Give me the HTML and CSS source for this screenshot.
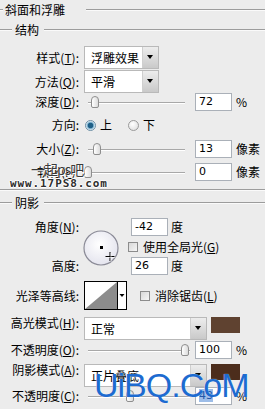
FILE: index.html
```html
<!DOCTYPE html>
<html lang="zh-CN">
<head>
  <meta charset="UTF-8" />
  <title>斜面和浮雕</title>
  <link rel="stylesheet" href="styles.css">
</head>
<body>
  <div class="panel">
    <div class="legend top"><span>斜面和浮雕</span></div>
    <div class="legend sub"><span>结构</span></div>

    <!-- 结构 -->
    <div class="row r-style">
      <label class="lbl">样式(<u>T</u>):</label>
      <div class="select s-short"><span>浮雕效果</span><i class="btn"></i></div>
    </div>
    <div class="row r-method">
      <label class="lbl">方法(<u>Q</u>):</label>
      <div class="select s-short"><span>平滑</span><i class="btn"></i></div>
    </div>
    <div class="row r-depth">
      <label class="lbl">深度(<u>D</u>):</label>
      <div class="slider"><i class="thumb" style="left:3px"></i></div>
      <div class="num">72</div><span class="unit">%</span>
    </div>
    <div class="row r-dir">
      <label class="lbl">方向:</label>
      <i class="radio on"></i><span class="rtext">上</span>
      <i class="radio"></i><span class="rtext">下</span>
    </div>
    <div class="row r-size">
      <label class="lbl">大小(<u>Z</u>):</label>
      <div class="slider"><i class="thumb" style="left:5px"></i></div>
      <div class="num">13</div><span class="unit">像素</span>
    </div>
    <div class="row r-soft">
      <label class="lbl">软化(<u>F</u>):</label>
      <div class="slider"><i class="thumb" style="left:-4px"></i></div>
      <div class="num">0</div><span class="unit">像素</span>
    </div>

    <div class="sep"></div>
    <div class="legend sub shadow"><span>阴影</span></div>

    <!-- 阴影 -->
    <div class="angle-block">
      <div class="col-labels">
        <label class="lbl">角度(<u>N</u>):</label>
        <label class="lbl">高度:</label>
      </div>
      <div class="dial">
        <svg width="38" height="38" viewBox="0 0 38 38">
          <defs>
            <radialGradient id="dg" cx="0.45" cy="0.4" r="0.6">
              <stop offset="0" stop-color="#ffffff"/>
              <stop offset="1" stop-color="#e4e4ee"/>
            </radialGradient>
          </defs>
          <circle cx="18" cy="18" r="17" fill="url(#dg)" stroke="#8a8a96" stroke-width="1.2"/>
          <rect x="17" y="16" width="3" height="3" fill="#000"/>
          <path d="M27 22v9M22.5 26.5h9" stroke="#000" stroke-width="1"/>
          <path d="M28 23v9M23.5 27.5h9" stroke="#fff" stroke-width="0.8" opacity="0.7"/>
        </svg>
      </div>
      <div class="col-fields">
        <div class="field"><div class="num">-42</div><span class="unit deg">度</span></div>
        <div class="field chk-row"><i class="check"></i><span>使用全局光(<u>G</u>)</span></div>
        <div class="field"><div class="num">26</div><span class="unit deg">度</span></div>
      </div>
    </div>

    <div class="row r-contour">
      <label class="lbl">光泽等高线:</label>
      <svg class="contour" width="43" height="29" viewBox="0 0 43 29">
        <rect x="0.5" y="0.5" width="33" height="28" fill="#fff" stroke="#000"/>
        <path d="M1 28L33 1V28Z" fill="#8c8c8c"/>
        <rect x="33.5" y="0.5" width="9" height="28" fill="#fff" stroke="#000"/>
        <path d="M35.5 13h5l-2.5 3z" fill="#000"/>
      </svg>
      <i class="check anti"></i><span>消除锯齿(<u>L</u>)</span>
    </div>

    <div class="row r-hmode">
      <label class="lbl">高光模式(<u>H</u>):</label>
      <div class="select s-long"><span>正常</span><i class="btn"></i></div>
      <i class="swatch hi"></i>
    </div>
    <div class="row r-op1">
      <label class="lbl">不透明度(<u>O</u>):</label>
      <div class="slider long"><i class="thumb" style="left:93px"></i></div>
      <div class="num">100</div><span class="unit">%</span>
    </div>
    <div class="row r-smode">
      <label class="lbl">阴影模式(<u>A</u>):</label>
      <div class="select s-long"><span>正片叠底</span><i class="btn"></i></div>
      <i class="swatch sh"></i>
    </div>
    <div class="row r-op2">
      <label class="lbl">不透明度(<u>C</u>):</label>
      <div class="slider long"><i class="thumb" style="left:38px"></i></div>
      <div class="num"><span class="sel">43</span></div><span class="unit">%</span>
    </div>

    <!-- watermarks -->
    <div class="wm-cn">一起ps吧</div>
    <div class="wm-url">www.17PS8.com</div>
    <div class="wm-big">UiBQ.CoM</div>
  </div>
</body>
</html>
```

FILE: styles.css
```css
body {
  margin: 0;
  background: #ececec;
  font-family: "Noto Sans CJK SC", "Liberation Sans", sans-serif;
  font-size: 12px;
  color: #000;
}
.panel {
  position: relative;
  width: 265px;
  height: 409px;
  overflow: hidden;
}
u {
  text-decoration-thickness: 1px;
  text-underline-offset: 1px;
}

/* group titles */
.legend {
  display: flex;
  align-items: center;
  height: 20px;
  line-height: 1;
}
.legend::before,
.legend::after {
  content: "";
  height: 1px;
  background: #9c9c9c;
  border-bottom: 1px solid #fafafa;
}
.legend::before { width: 3px; margin-right: 2px; }
.legend::after { flex: 1; margin-left: 21px; }
.legend.sub::before { width: 12px; margin-right: 3px; }
.legend.sub::after { margin-left: 5px; }
.legend.shadow {
  height: 18px;
  margin-top: 3px;
}
.sep {
  height: 1px;
  margin-top: 8px;
  background: #9c9c9c;
  border-bottom: 1px solid #fafafa;
}

/* rows */
.row {
  display: flex;
  align-items: center;
  height: 18px;
}
.lbl {
  flex: none;
  width: 79px;
  margin-right: 5px;
  text-align: right;
  line-height: 1;
  white-space: nowrap;
}
.r-style { height: 23px; margin-top: 6px; }
.r-method { height: 23px; margin-top: 1px; }
.r-depth { margin-top: 0; }
.r-dir { margin-top: 5px; }
.r-size { margin-top: 6px; }
.r-soft { margin-top: 5px; }
.r-contour { height: 29px; margin-top: 6px; }
.r-hmode { height: 23px; margin-top: 7px; align-items: flex-start; }
.r-op1 { margin-top: 1px; }
.r-smode { height: 23px; margin-top: 5px; align-items: flex-start; }
.r-op2 { margin-top: 0; }

/* dropdowns */
.select {
  display: flex;
  height: 23px;
  box-sizing: border-box;
  border: 1px solid #b9b9b9;
  background: #fff;
}
.select span {
  flex: 1;
  padding-left: 6px;
  line-height: 21px;
}
.select .btn {
  position: relative;
  width: 15px;
  border-left: 1px solid #cfcfcf;
  background: linear-gradient(#ededed, #c9c9c9);
}
.select .btn::after {
  content: "";
  position: absolute;
  left: 4px;
  top: 8px;
  border-left: 3.5px solid transparent;
  border-right: 3.5px solid transparent;
  border-top: 4px solid #000;
}
.s-short { width: 75px; }
.s-long { width: 123px; }

/* sliders */
.slider {
  position: relative;
  flex: none;
  width: 97px;
  height: 18px;
  margin-left: 4px;
  margin-right: 10px;
}
.slider.long {
  width: 102px;
  margin-right: 5px;
}
.slider::before {
  content: "";
  position: absolute;
  left: 0;
  right: 0;
  top: 9px;
  height: 1px;
  background: #a8a8a8;
  border-bottom: 1px solid #fff;
}
.thumb {
  position: absolute;
  top: 3px;
  width: 8px;
  height: 12px;
  box-sizing: border-box;
  border: 1px solid #8e8e8e;
  border-radius: 4px 4px 2px 2px;
  background: linear-gradient(90deg, #fff, #dcdcdc);
}

/* number fields */
.num {
  flex: none;
  width: 37px;
  height: 18px;
  box-sizing: border-box;
  border: 1px solid #aab0b8;
  background: #fff;
  padding-left: 3px;
  font-family: "DejaVu Sans", sans-serif;
  font-size: 11px;
  line-height: 16px;
}
.num .sel {
  background: #9dbde8;
  color: #2456a8;
}
.unit {
  margin-left: 4px;
  line-height: 1;
}
.unit.deg { margin-left: 3px; }

/* radios & checks */
.radio {
  flex: none;
  width: 11px;
  height: 11px;
  box-sizing: border-box;
  border: 1px solid #9a9a9a;
  border-radius: 50%;
  background: radial-gradient(circle at 40% 35%, #fff, #dadada);
  margin-left: 1px;
}
.radio.on {
  background: radial-gradient(circle, #1f5f86 0 2.5px, #6fa8c8 3px, #e8f2f8 4.5px);
  border-color: #6b8ea5;
}
.rtext {
  margin-left: 4px;
  margin-right: 15px;
  line-height: 1;
}
.check {
  flex: none;
  width: 10px;
  height: 10px;
  box-sizing: border-box;
  border: 1px solid #8c8c8c;
  background: linear-gradient(135deg, #d8d8d8, #f6f6f6);
  margin-right: 5px;
}
.check.anti { margin-left: 13px; margin-right: 5px; }

/* angle / altitude */
.angle-block {
  display: flex;
  height: 57px;
  margin-top: 6px;
}
.col-labels {
  display: flex;
  flex-direction: column;
  justify-content: space-between;
}
.col-labels .lbl { height: 18px; line-height: 18px; }
.dial {
  width: 44px;
  padding-top: 12px;
}
.dial svg { display: block; margin-left: -1px; }
.col-fields {
  display: flex;
  flex-direction: column;
  padding-left: 3px;
}
.field {
  display: flex;
  align-items: center;
  height: 18px;
}
.field.chk-row {
  height: 16px;
  margin: 3px 0 2px -3px;
}
.chk-row span { line-height: 1; }

/* contour */
.contour {
  display: block;
  flex: none;
}

/* swatches */
.swatch {
  flex: none;
  width: 29px;
  height: 16px;
  margin-left: 4px;
}
.swatch.hi { background: #5f4230; }
.swatch.sh { background: #4c2d1c; }

/* watermarks over the dialog */
.wm-cn {
  position: absolute;
  left: 31px;
  top: 160px;
  font-size: 14px;
  letter-spacing: -1px;
  color: #3a3a3a;
  text-shadow: 0 0 1px #fff, 1px 1px 0 #fff;
  line-height: 18px;
}
.wm-url {
  position: absolute;
  left: 10px;
  top: 178px;
  font-family: "DejaVu Sans Mono", monospace;
  font-weight: bold;
  font-size: 11px;
  letter-spacing: 0.9px;
  color: #2e2e2e;
  line-height: 12px;
  text-shadow: 1px 0 0 #fff, -1px 0 0 #fff, 0 1px 0 #fff, 0 -1px 0 #fff;
}
.wm-big {
  position: absolute;
  left: 94px;
  top: 368px;
  font-family: "Liberation Sans", sans-serif;
  font-size: 34px;
  letter-spacing: -1px;
  line-height: 34px;
  color: #1d6bd0;
  text-shadow: 0 0 1px #fff;
}
```
